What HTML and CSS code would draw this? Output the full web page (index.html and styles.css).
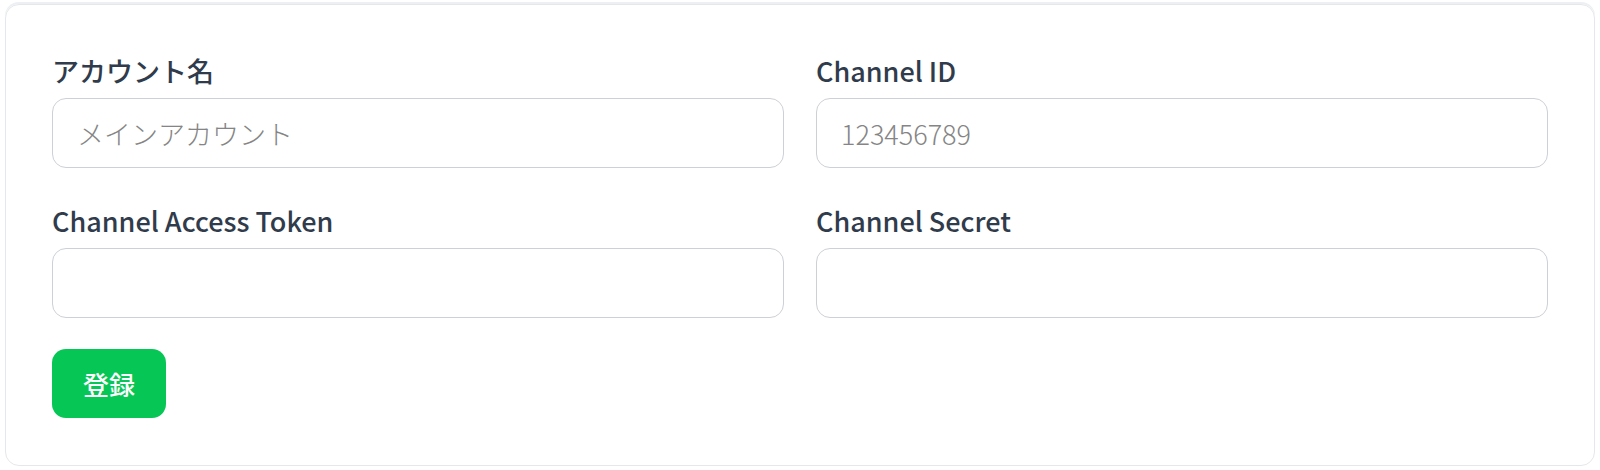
FILE: index.html
```html
<!DOCTYPE html>
<html lang="ja">

<head>
  <meta charset="UTF-8">
  <meta name="viewport" content="width=device-width, initial-scale=1.0">
  <title>アカウント登録</title>
  <link rel="stylesheet" href="styles.css">
</head>

<body>
  <!-- Account form card -->
  <main class="card">
    <form class="account-form" onsubmit="return false;">
      <div class="form-grid">
        <div class="field">
          <label class="field-label" for="account-name">アカウント名</label>
          <input class="field-input" id="account-name" type="text" placeholder="メインアカウント">
        </div>
        <div class="field">
          <label class="field-label" for="channel-id">Channel ID</label>
          <input class="field-input" id="channel-id" type="text" placeholder="123456789">
        </div>
        <div class="field">
          <label class="field-label" for="access-token">Channel Access Token</label>
          <input class="field-input" id="access-token" type="text">
        </div>
        <div class="field">
          <label class="field-label" for="channel-secret">Channel Secret</label>
          <input class="field-input" id="channel-secret" type="text">
        </div>
      </div>
      <button class="submit-button" type="submit">登録</button>
    </form>
  </main>
</body>

</html>
```

FILE: styles.css
```css
/* Color Variables */
:root {
  --text-color: hsl(216, 22%, 24%);
  --placeholder-color: hsl(0, 0%, 52%);
  --border-color: hsl(220, 9%, 82%);
  --card-border: hsl(220, 14%, 91%);
  --line-green: #06c755;
}

* {
  margin: 0;
  padding: 0;
  box-sizing: border-box;
}

body {
  font-family: "Noto Sans CJK JP", "Noto Sans", sans-serif;
  background: #fff;
  color: var(--text-color);
  padding: 4px 5px 0;
}

/* Card */
.card {
  border: 1px solid var(--card-border);
  border-radius: 14px;
  padding: 45px 46px 47px;
  box-shadow: 0 -2px 0 hsl(220, 16%, 94%);
}

/* Form grid */
.form-grid {
  display: grid;
  grid-template-columns: 1fr 1fr;
  column-gap: 32px;
  row-gap: 32px;
}

.field {
  display: flex;
  flex-direction: column;
  gap: 6px;
}

.field-label {
  font-size: 27px;
  font-weight: 500;
  line-height: 42px;
}

.field-input {
  font-family: inherit;
  font-size: 27px;
  line-height: 42px;
  height: 70px;
  padding: 0 24px;
  border: 1px solid var(--border-color);
  border-radius: 14px;
  color: var(--text-color);
  outline: none;
  background: #fff;
}

.field-input::placeholder {
  color: var(--placeholder-color);
  font-weight: 300;
}

/* Submit button */
.submit-button {
  margin-top: 31px;
  font-family: inherit;
  font-size: 26px;
  font-weight: 500;
  color: #fff;
  background: var(--line-green);
  border: none;
  border-radius: 14px;
  height: 69px;
  padding: 0 31px;
  cursor: pointer;
}
```
